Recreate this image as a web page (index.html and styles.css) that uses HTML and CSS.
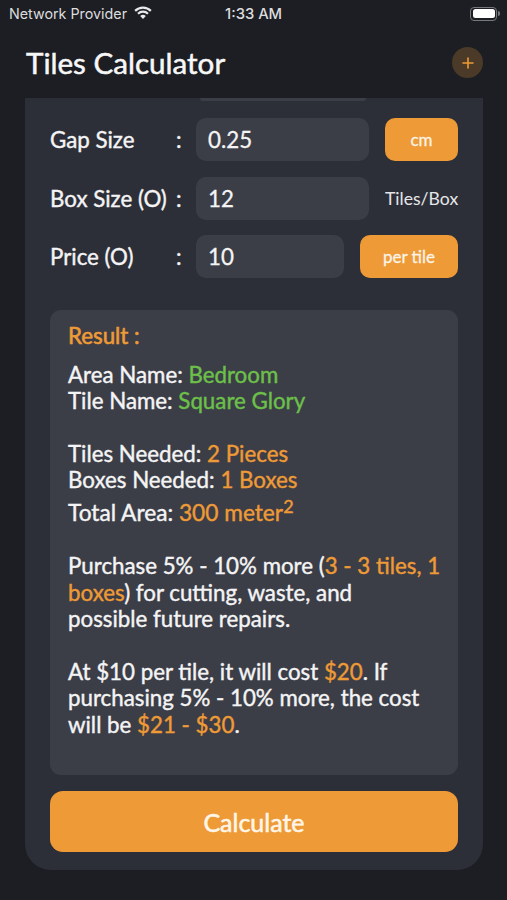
FILE: index.html
```html
<!DOCTYPE html>
<html lang="en">
<head>
<meta charset="utf-8">
<title>Tiles Calculator</title>
<link rel="stylesheet" href="styles.css">
</head>
<body>
<div class="status">
  <div class="status-left">
    <span>Network Provider</span>
    <svg class="wifi" viewBox="0 0 20 15" width="18" height="14"><path d="M10 14.2 6.9 10.9a4.4 4.4 0 0 1 6.2 0Z" fill="#e8e8ea"/><path d="M5.3 9.3 3.6 7.5a9 9 0 0 1 12.8 0l-1.7 1.8a6.6 6.6 0 0 0-9.4 0Z" fill="#e8e8ea"/><path d="M2.1 6 .4 4.2a13.6 13.6 0 0 1 19.2 0L17.9 6a11.2 11.2 0 0 0-15.8 0Z" fill="#e8e8ea"/></svg>
  </div>
  <span class="status-time">1:33 AM</span>
  <div class="battery"><div class="battery-body"><div class="battery-fill"></div></div><div class="battery-tip"></div></div>
</div>
<header class="nav">
  <h1>Tiles Calculator</h1>
  <div class="add"><svg viewBox="0 0 12 12" width="12" height="12"><path d="M6 1v10M1 6h10" stroke="#ee9a36" stroke-width="1.6" stroke-linecap="round"/></svg></div>
</header>
<main class="card">
  <div class="clip-field"></div>
  <div class="row">
    <span class="label">Gap Size</span><span class="colon">:</span>
    <div class="field"><span>0.25</span></div>
    <div class="unit unit-cm">cm</div>
  </div>
  <div class="row">
    <span class="label">Box Size (O)</span><span class="colon">:</span>
    <div class="field"><span>12</span></div>
    <div class="unit-text">Tiles/Box</div>
  </div>
  <div class="row">
    <span class="label">Price (O)</span><span class="colon">:</span>
    <div class="field"><span>10</span></div>
    <div class="unit unit-price">per tile</div>
  </div>
  <section class="result">
    <p class="result-title">Result :</p>
    <p class="block">Area Name: <b class="green">Bedroom</b><br>Tile Name: <b class="green">Square Glory</b></p>
    <p class="block block-totals">Tiles Needed: <b>2 Pieces</b><br>Boxes Needed: <b>1 Boxes</b><br><span class="area">Total Area: <b>300 meter<sup>2</sup></b></span></p>
    <p class="block">Purchase 5% - 10% more (<b>3 - 3 tiles, 1<br>boxes</b>) for cutting, waste, and<br>possible future repairs.</p>
    <p class="block">At $10 per tile, it will cost <b>$20</b>. If<br>purchasing 5% - 10% more, the cost<br>will be <b>$21 - $30</b>.</p>
  </section>
  <div class="calc">Calculate</div>
</main>
</body>
</html>
```
FILE: styles.css
```css
* { box-sizing: border-box; margin: 0; padding: 0; }
html, body { width: 507px; height: 900px; overflow: hidden; }
body { background: #1c1e23; color: #f4f4f5; font-family: Lato, "Open Sans", sans-serif; }
.status { height: 27px; display: flex; align-items: center; position: relative; padding: 0 7px 0 9px; justify-content: space-between; font-family: Inter, "Liberation Sans", sans-serif; font-size: 14.3px; color: #dcdcde; }
.status-left { display: flex; align-items: center; gap: 7px; }
.wifi { margin-top: -1px; }
.status-time { position: absolute; left: 225px; font-size: 14.8px; font-weight: 500; }
.battery { display: flex; align-items: center; gap: 1px; }
.battery-body { width: 27px; height: 14px; border: 1px solid #77787c; border-radius: 4px; padding: 1.5px; }
.battery-fill { height: 100%; background: #fff; border-radius: 2.5px; }
.battery-tip { width: 2px; height: 5px; background: #77787c; border-radius: 0 2px 2px 0; }
.nav { height: 71px; padding: 0 24px 0 26px; display: flex; align-items: center; justify-content: space-between; }
.nav h1 { font-size: 29.6px; font-weight: 400; -webkit-text-stroke: 0.5px #f7f7f8; color: #f7f7f8; }
.add { width: 31px; height: 31px; border-radius: 50%; background: #4b3a28; display: flex; align-items: center; justify-content: center; }
.card { margin: 0 24px 0 25px; height: 772px; background: #2d2f38; border-radius: 0 0 26px 26px; padding: 20px 25px 0; position: relative; }
.clip-field { position: absolute; left: 175px; top: 0; width: 166px; height: 3px; background: #3c3e47; border-radius: 0 0 6px 6px; }
.row { display: flex; align-items: center; height: 43px; margin-bottom: 15.5px; }
.label { width: 126px; font-size: 22.3px; white-space: nowrap; -webkit-text-stroke: 0.4px #f4f4f5; }
.colon { width: 20px; font-size: 22.3px; -webkit-text-stroke: 0.4px #f4f4f5; }
.field { flex: 1; height: 43px; background: #3c3e47; border-radius: 10px; display: flex; align-items: center; padding: 0 12px; font-size: 22.3px; -webkit-text-stroke: 0.3px #f4f4f5; }
.unit { height: 43px; background: #ee9a36; border-radius: 10px; display: flex; align-items: center; justify-content: center; font-size: 17px; color: #fbf3e6; -webkit-text-stroke: 0.3px #fbf3e6; }
.unit-cm { width: 73px; margin-left: 16px; }
.unit-price { width: 98px; margin-left: 16px; }
.unit-text { width: 73px; margin-left: 16px; font-size: 17.6px; text-align: right; color: #e6e6e8; white-space: nowrap; }
.result { margin-top: 32px; height: 465px; background: #3c3e47; border-radius: 11px; padding: 13px 0 13px 18px; font-size: 22.3px; line-height: 26.5px; -webkit-text-stroke: 0.4px currentColor; white-space: nowrap; }
.result b { font-weight: 400; color: #ee9a36; }
.result b.green { color: #6cc04a; }
.result-title { color: #ee9a36; margin-bottom: 12px; -webkit-text-stroke: 0.6px currentColor; }
.block { margin-bottom: 26px; }
.block-totals { margin-bottom: 27px; }
.area { display: inline-block; margin-top: 6px; font-size: 22.7px; }
sup { font-size: 18px; line-height: 0; vertical-align: 8px; }
.calc { margin-top: 16px; height: 61px; background: #ee9a36; border-radius: 13px; display: flex; align-items: center; justify-content: center; font-size: 25px; color: #fff6e8; -webkit-text-stroke: 0.55px #fff6e8; }
```
